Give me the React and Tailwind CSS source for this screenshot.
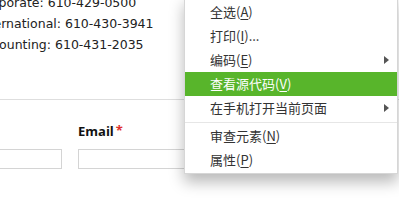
import React from 'react';

const menuItems = [
  { label: '全选', key: 'A' },
  { label: '打印', key: 'I', suffix: '...' },
  { label: '编码', key: 'E', sub: true },
  { label: '查看源代码', key: 'V', active: true },
  { label: '在手机打开当前页面', sub: true },
  { divider: true },
  { label: '审查元素', key: 'N' },
  { label: '属性', key: 'P' },
];

const ContextMenu = () => (
  <div className="absolute left-[184px] top-[-4px] w-[214px] bg-white border border-[#d6d6d6] pt-[3px] pb-px shadow-[0_8px_14px_rgba(0,0,0,0.28)] font-['Noto_Sans_CJK_SC',sans-serif] text-[13px] text-[#333]">
    {menuItems.map((item, i) =>
      item.divider ? (
        <div key={i} className="mt-[2px] mb-px h-px bg-[#e6e6e6]" />
      ) : (
        <div
          key={i}
          className={`relative flex h-6 items-center pl-[25px] ${item.active ? 'bg-[#58b52b] text-white' : ''}`}
        >
          <span>
            {item.label}
            {item.key && (
              <>
                (<span className="underline underline-offset-2">{item.key}</span>)
              </>
            )}
            {item.suffix}
          </span>
          {item.sub && (
            <span className="absolute right-[8px] top-[8px] h-0 w-0 border-y-[4px] border-l-[5px] border-y-transparent border-l-[#555]" />
          )}
        </div>
      )
    )}
  </div>
);

export default function App() {
  return (
    <div className="relative h-[210px] w-[399px] overflow-hidden bg-white">
      <div className="flex h-[100px] flex-col border-b border-[#dedede]">
        <div className="ml-[-23px] mt-[-8px] font-['DejaVu_Sans',sans-serif] text-[12.5px] leading-[21px] text-[#222]">
          <div>Corporate: 610-429-0500</div>
          <div>International: 610-430-3941</div>
          <div>Accounting: 610-431-2035</div>
        </div>
      </div>

      <div className="ml-[-138px] flex gap-4 pt-[23px]">
        <div className="w-[200px]">
          <div className="mb-2 h-[18px]" />
          <div className="h-5 border border-[#d4d4d4] bg-white" />
        </div>
        <div className="w-[200px]">
          <div className="mb-2 flex h-[18px] items-center font-['Open_Sans',sans-serif] text-[13px] font-bold text-[#111]">
            Email
            <span className="ml-[2px] self-start text-[13px] leading-[14px] text-[#e0302d]">*</span>
          </div>
          <div className="h-5 border border-[#d4d4d4] bg-white" />
        </div>
      </div>

      <ContextMenu />
    </div>
  );
}
